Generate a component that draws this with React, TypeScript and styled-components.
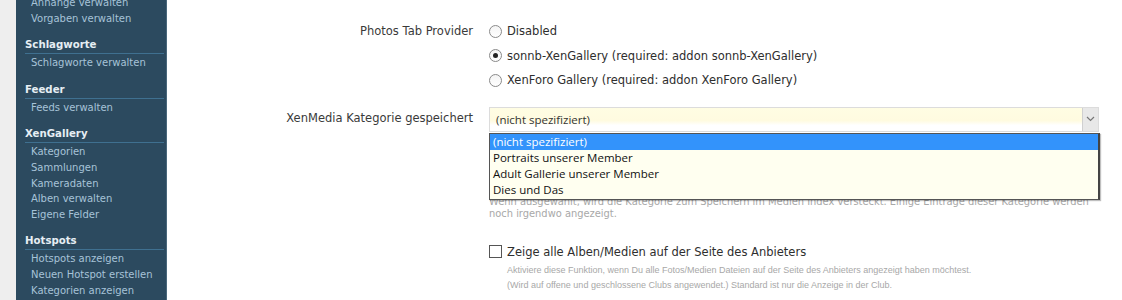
import React from "react";
import styled, { createGlobalStyle } from "styled-components";

const Global = createGlobalStyle`
  html, body { margin: 0; padding: 0; background: #ffffff; }
  body { font-family: "Liberation Sans", Arial, sans-serif; overflow: hidden; }
  * { box-sizing: border-box; }
`;

const Page = styled.div`
  display: flex;
  width: 1122px;
  height: 300px;
  overflow: hidden;
`;

const Gutter = styled.div`
  width: 16px;
  background: #eeeeee;
  flex: none;
`;

const Sidebar = styled.nav`
  width: 151px;
  flex: none;
  background: #2c4a5f;
  border-right: 1px solid #4a687c;
  overflow: hidden;
`;

const NavList = styled.div`
  margin-top: -5px;
  padding: 0 2px 0 9px;
`;

const Group = styled.div`
  margin-bottom: 10px;
`;

const Heading = styled.div`
  font-family: "DejaVu Sans", sans-serif;
  font-weight: bold;
  font-size: 10.2px;
  color: #e6eef4;
  height: 18px;
  line-height: 17px;
  border-bottom: 1px solid #3f7090;
  margin-bottom: 1px;
`;

const NavItem = styled.div`
  font-family: "DejaVu Sans", sans-serif;
  font-size: 10px;
  color: #a7c3d8;
  height: 15.6px;
  line-height: 15.6px;
  padding-left: 6px;
  white-space: nowrap;
`;

const Main = styled.main`
  flex: 1;
  padding-top: 19px;
  position: relative;
`;

const Row = styled.div<{ $gap?: number }>`
  display: grid;
  grid-template-columns: 306px 1fr;
  column-gap: 16px;
  margin-bottom: ${(p) => p.$gap ?? 0}px;
`;

const Label = styled.div<{ $h: number }>`
  font-family: "DejaVu Sans", sans-serif;
  font-size: 11.5px;
  color: #3a3a3a;
  text-align: right;
  line-height: ${(p) => p.$h}px;
`;

const Controls = styled.div`
  display: flex;
  flex-direction: column;
  position: relative;
`;

const Choice = styled.label`
  display: flex;
  align-items: center;
  gap: 5px;
  height: 24.5px;
  font-family: "DejaVu Sans", sans-serif;
  font-size: 11.5px;
  color: #2e2e2e;
`;

const Radio = styled.span<{ $checked?: boolean }>`
  width: 13px;
  height: 13px;
  border-radius: 50%;
  border: 1px solid #8a8a8a;
  background: linear-gradient(#f4f4f4, #ffffff);
  display: inline-flex;
  align-items: center;
  justify-content: center;
  flex: none;
  &::after {
    content: "";
    width: 5px;
    height: 5px;
    border-radius: 50%;
    background: ${(p) => (p.$checked ? "#222" : "transparent")};
  }
`;

const Box = styled.span`
  width: 13px;
  height: 13px;
  border: 1px solid #555;
  background: #fff;
  flex: none;
`;

const Select = styled.div`
  height: 25px;
  width: 610px;
  border: 1px solid #dcdcdc;
  background: linear-gradient(#fffde3 0%, #fffbe0 55%, #ffffff 75%);
  display: flex;
  align-items: center;
  justify-content: space-between;
  padding-left: 6px;
  font-family: "Open Sans", sans-serif;
  font-size: 11.5px;
  color: #333;
`;

const Arrow = styled.span`
  width: 16px;
  height: 23px;
  background: #e8e8e8;
  border-left: 1px solid #d0d0d0;
  display: flex;
  align-items: center;
  justify-content: center;
`;

const Dropdown = styled.div`
  position: absolute;
  top: 26px;
  left: 0;
  width: 611px;
  background: #fffff0;
  border: 1px solid #555;
  border-right: 2px solid #444;
  box-shadow: 1px 1px 1px rgba(0, 0, 0, 0.25);
  z-index: 2;
  padding-bottom: 1px;
`;

const Option = styled.div<{ $active?: boolean }>`
  height: 16.2px;
  line-height: 16px;
  padding-left: 3px;
  font-family: "Open Sans", sans-serif;
  font-size: 11.5px;
  color: ${(p) => (p.$active ? "#fff" : "#111")};
  background: ${(p) => (p.$active ? "#3393fb" : "transparent")};
`;

const SelectHint = styled.div`
  font-family: "DejaVu Sans", sans-serif;
  font-size: 9.9px;
  color: #a8a8a8;
  line-height: 12px;
  margin-top: 64px;
  white-space: nowrap;
`;

const Hint = styled.div`
  font-family: "Liberation Sans", sans-serif;
  font-size: 9px;
  color: #a8a8a8;
  line-height: 15px;
  padding-left: 18px;
  margin-top: -1.5px;
  white-space: nowrap;
`;

const sidebar = [
  { items: ["Anhänge verwalten", "Vorgaben verwalten"] },
  { title: "Schlagworte", items: ["Schlagworte verwalten"] },
  { title: "Feeder", items: ["Feeds verwalten"] },
  {
    title: "XenGallery",
    items: ["Kategorien", "Sammlungen", "Kameradaten", "Alben verwalten", "Eigene Felder"],
  },
  {
    title: "Hotspots",
    items: ["Hotspots anzeigen", "Neuen Hotspot erstellen", "Kategorien anzeigen"],
  },
];

const options = [
  "(nicht spezifiziert)",
  "Portraits unserer Member",
  "Adult Gallerie unserer Member",
  "Dies und Das",
];

export default function App() {
  return (
    <Page>
      <Global />
      <Gutter />
      <Sidebar>
        <NavList>
          {sidebar.map((g, i) => (
            <Group key={i}>
              {g.title && <Heading>{g.title}</Heading>}
              {g.items.map((it) => (
                <NavItem key={it}>{it}</NavItem>
              ))}
            </Group>
          ))}
        </NavList>
      </Sidebar>
      <Main>
        <Row $gap={14}>
          <Label $h={24.5}>Photos Tab Provider</Label>
          <Controls>
            <Choice>
              <Radio />
              Disabled
            </Choice>
            <Choice>
              <Radio $checked />
              sonnb-XenGallery (required: addon sonnb-XenGallery)
            </Choice>
            <Choice>
              <Radio />
              XenForo Gallery (required: addon XenForo Gallery)
            </Choice>
          </Controls>
        </Row>
        <Row $gap={20}>
          <Label $h={23}>XenMedia Kategorie gespeichert</Label>
          <Controls>
            <Select>
              (nicht spezifiziert)
              <Arrow>
                <svg width="9" height="6" viewBox="0 0 9 6">
                  <path d="M1 1 L4.5 4.5 L8 1" fill="none" stroke="#777" strokeWidth="1.2" />
                </svg>
              </Arrow>
            </Select>
            <Dropdown>
              {options.map((o, i) => (
                <Option key={o} $active={i === 0}>
                  {o}
                </Option>
              ))}
            </Dropdown>
            <SelectHint>
              Wenn ausgewählt, wird die Kategorie zum Speichern im Medien Index versteckt. Einige Einträge dieser Kategorie werden
              <br />
              noch irgendwo angezeigt.
            </SelectHint>
          </Controls>
        </Row>
        <Row>
          <div />
          <Controls>
            <Choice>
              <Box />
              Zeige alle Alben/Medien auf der Seite des Anbieters
            </Choice>
            <Hint>
              Aktiviere diese Funktion, wenn Du alle Fotos/Medien Dateien auf der Seite des Anbieters angezeigt haben möchtest.
              <br />
              (Wird auf offene und geschlossene Clubs angewendet.) Standard ist nur die Anzeige in der Club.
            </Hint>
          </Controls>
        </Row>
      </Main>
    </Page>
  );
}
